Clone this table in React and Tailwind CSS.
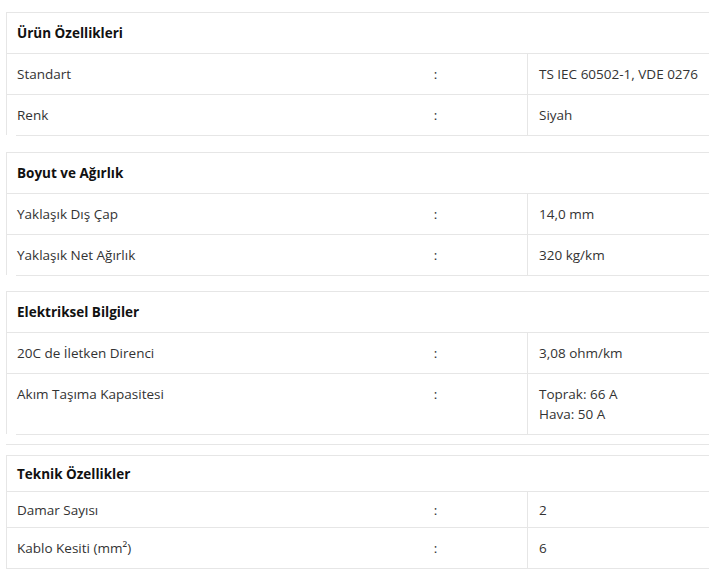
import React from "react";

const sections = [
  {
    title: "Ürün Özellikleri",
    rows: [
      ["Standart", ["TS IEC 60502-1, VDE 0276"]],
      ["Renk", ["Siyah"]],
    ],
    mt: "",
  },
  {
    title: "Boyut ve Ağırlık",
    rows: [
      ["Yaklaşık Dış Çap", ["14,0 mm"]],
      ["Yaklaşık Net Ağırlık", ["320 kg/km"]],
    ],
    mt: "mt-[16px]",
  },
  {
    title: "Elektriksel Bilgiler",
    rows: [
      ["20C de İletken Direnci", ["3,08 ohm/km"]],
      ["Akım Taşıma Kapasitesi", ["Toprak: 66 A", "Hava: 50 A"]],
    ],
    extraLine: true,
    mt: "mt-[15px]",
  },
];

function Row({ label, values, last, compact }) {
  return (
    <div
      className={`grid grid-cols-[337px_183px_1fr] ${last ? "" : "border-b border-[#e6e6e6]"}`}
    >
      <div className={`pl-[10px] ${compact ? "pt-[8px] pb-[7px]" : "py-[10px]"}`}>{label}</div>
      <div className={`text-center ${compact ? "pt-[8px] pb-[7px]" : "py-[10px]"}`}>:</div>
      <div className={`border-l border-[#e6e6e6] pl-[11px] ${compact ? "pt-[8px] pb-[7px]" : "py-[10px]"}`}>
        {values.map((v) => (
          <div key={v}>{v}</div>
        ))}
      </div>
    </div>
  );
}

export default function App() {
  return (
    <div
      className="w-[709px] h-[572px] overflow-hidden bg-white pt-[12px] text-[13.5px] leading-[20px] text-[#333333]"
      style={{ fontFamily: '"Open Sans", "Liberation Sans", sans-serif' }}
    >
      {sections.map((s) => (
        <div key={s.title} className={s.mt}>
          <div className="ml-[6px] w-[740px] border-l border-t border-[#e6e6e6]">
            <div className="border-b border-[#e6e6e6] py-[10px] pl-[10px] font-bold text-[#111111]">
              {s.title}
            </div>
            {s.rows.map((r, j) => (
              <Row key={r[0]} label={r[0]} values={r[1]} last={j === s.rows.length - 1} />
            ))}
          </div>
          <div className="ml-[16px] border-t border-[#e6e6e6]" />
          {s.extraLine && <div className="ml-[6px] mt-[9px] border-t border-[#e6e6e6]" />}
        </div>
      ))}
      <div className="mt-[10px]">
        <div className="ml-[6px] w-[740px] border-l border-t border-[#e6e6e6]">
          <div className="border-b border-[#e6e6e6] pt-[8px] pb-[7px] pl-[10px] font-bold text-[#111111]">
            Teknik Özellikler
          </div>
          <Row label="Damar Sayısı" values={["2"]} compact />
          <Row label="Kablo Kesiti (mm²)" values={["6"]} last />
        </div>
        <div className="ml-[6px] border-t border-[#e6e6e6]" />
      </div>
    </div>
  );
}
